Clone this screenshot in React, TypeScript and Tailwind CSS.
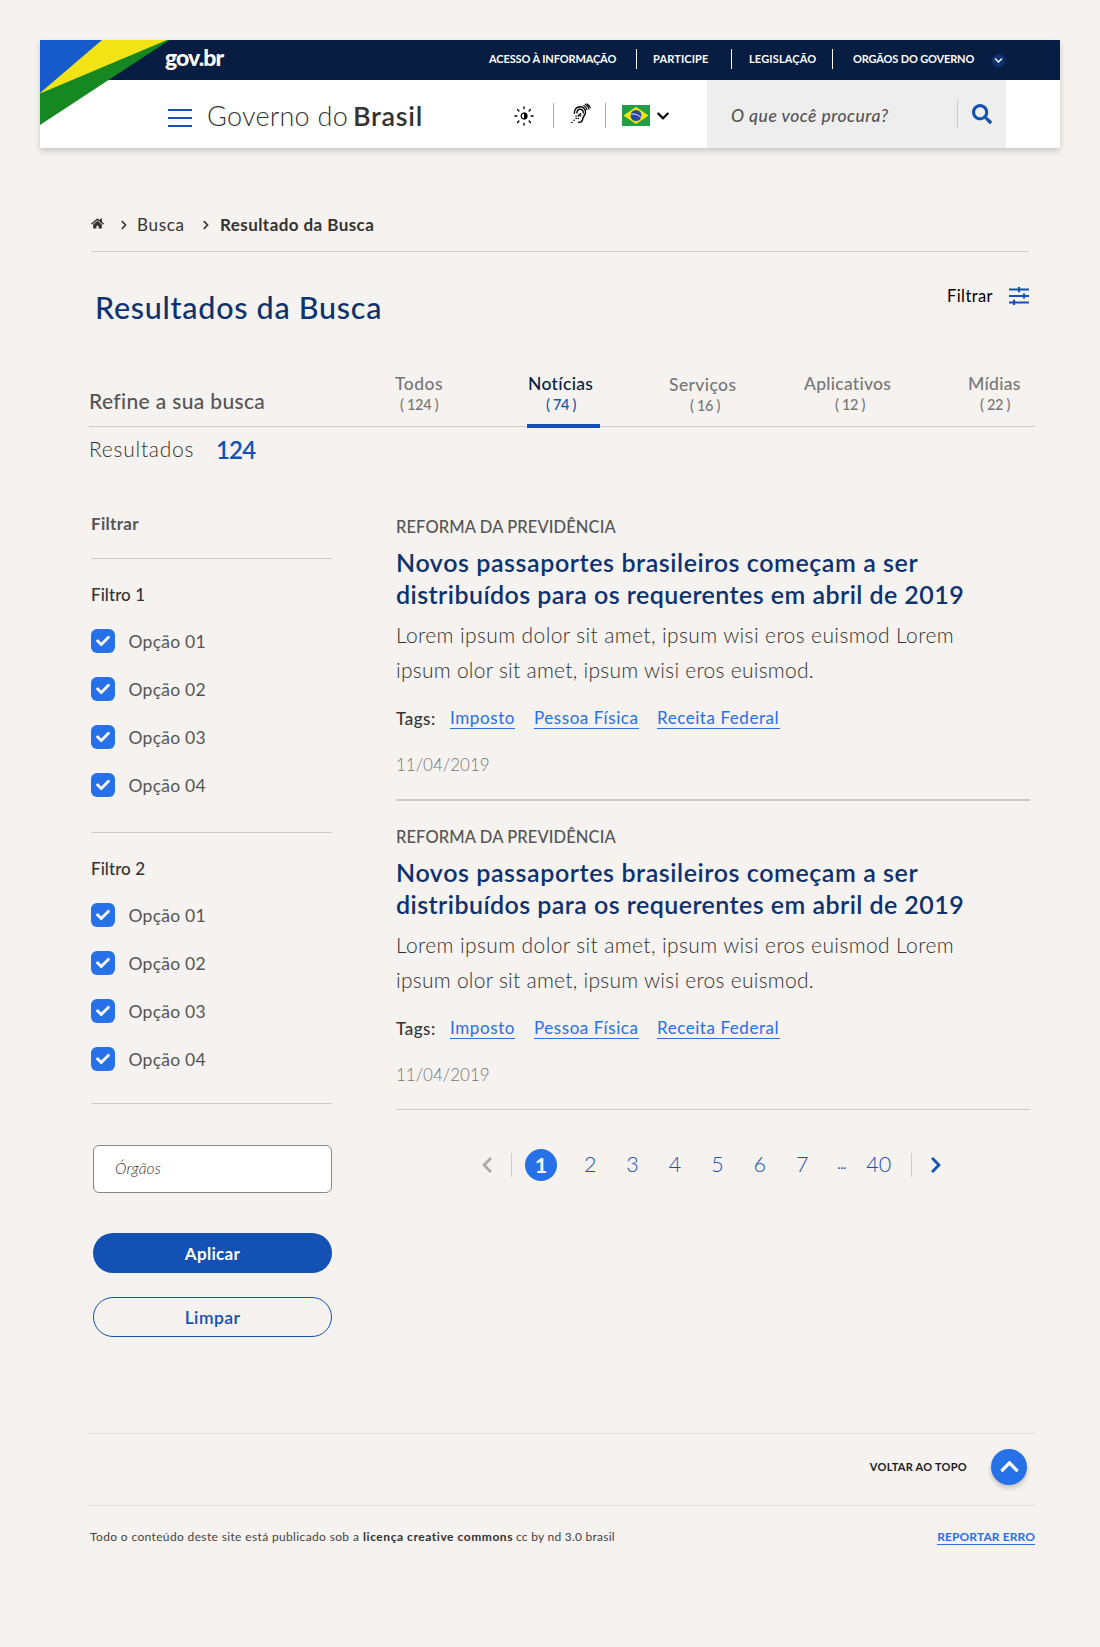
import {
  FaCheck,
  FaChevronDown,
  FaChevronLeft,
  FaChevronRight,
  FaChevronUp,
  FaHome,
  FaSearch,
} from "react-icons/fa";

function FlagCorner() {
  return (
    <svg className="absolute left-0 top-0" width="130" height="86" viewBox="0 0 130 86" aria-hidden="true">
      <polygon points="0,0 129.5,0 0,85" fill="#168821" />
      <polygon points="0,0 127,0 0,53.5" fill="#f2e317" />
      <polygon points="0,0 62,0 0,53" fill="#155bcb" />
    </svg>
  );
}

function BrightnessIcon() {
  return (
    <svg width="20" height="20" viewBox="0 0 20 20" fill="none" stroke="#000" strokeWidth="1.4" strokeLinecap="round" aria-hidden="true">
      <circle cx="10" cy="10" r="2.8" strokeWidth="1.2" />
      <path d="M10 6.6a3.4 3.4 0 0 1 0 6.8z" fill="#000" stroke="none" />
      <path d="M10 .9v1.7M10 17.4v1.7M.9 10h2M17.1 10h2M3.6 3.6l1.3 1.3M15.1 15.1l1.3 1.3M3.6 16.4l1.3-1.3M15.1 4.9l1.3-1.3" />
    </svg>
  );
}

function HearingIcon() {
  return (
    <svg width="20" height="21" viewBox="0 0 20 21" fill="none" stroke="#000" strokeWidth="1.4" strokeLinecap="round" aria-hidden="true">
      <path d="M3.4 10.200C3.100 6.200 5.800 3.700 9.100 3.700c3.500 0 5.900 2.600 5.400 6-.4 2.600-2.200 3.400-2.600 5.700-.4 2.300-1.500 4.200-4.300 3.900" />
      <path d="M5.900 9.900c-.1-2.300 1.300-3.700 3.300-3.700 2.100 0 3.300 1.500 3 3.600" />
      <path d="M12.700 2.500c1.700.8 2.900 2.300 3.300 4.200M14.300 1.200c1.900 1 3.200 2.700 3.600 4.700M16.200.9c1.400.9 2.500 2.200 3 3.700" strokeWidth="1.200" />
      <path d="M.9 19.500h.1M3 17.300h.1M5.100 15.200l.1.100M7.200 15.600h.1M5 12.900h.1M7.300 12.900l2.200-2.200M9.600 13.100h.1" strokeWidth="1.500" />
    </svg>
  );
}

function BrazilFlag() {
  return (
    <svg width="28" height="21" viewBox="0 0 28 21" aria-hidden="true">
      <rect width="28" height="21" fill="#239e46" />
      <path d="M1.500 10.500 14 2l12.500 8.500L14 19z" fill="#f8e509" />
      <circle cx="14" cy="10.500" r="5.500" fill="#2b49a3" />
      <path d="M8.800 9.200c3.800-.7 7.300.4 10.200 3.300" fill="none" stroke="#dfe6f3" strokeWidth="1" />
    </svg>
  );
}

function SlidersIcon() {
  return (
    <svg width="20" height="18" viewBox="0 0 20 18" stroke="#1351b4" strokeWidth="2.200" fill="none" aria-hidden="true">
      <path d="M0 2.500h20M0 9h20M0 15.500h20" />
      <path d="M10 0v5.200M15 6.400v5.200M5 12.800v5.200" />
    </svg>
  );
}

const tabs = [
  { label: "Todos", count: "( 124 )", box: "w-[132px]", labelGap: "tracking-[0.5px]", countGap: "ml-[5px]" },
  { label: "Notícias", count: "( 74 )", box: "w-[142px]", labelGap: "ml-px tracking-[0.35px]", countGap: "ml-[19px]", active: true },
  { label: "Serviços", count: "( 16 )", box: "w-[135px] pt-px", labelGap: "tracking-[0.4px]", countGap: "ml-[21px]" },
  { label: "Aplicativos", count: "( 12 )", box: "w-[164px]", labelGap: "tracking-[0.28px]", countGap: "ml-[31px]" },
  { label: "Mídias", count: "( 22 )", box: "w-[67px]", labelGap: "tracking-[0.3px]", countGap: "ml-[12px]" },
];

const options = ["Opção 01", "Opção 02", "Opção 03", "Opção 04"];

function Header() {
  return (
    <header className="relative mx-10 h-[108px] bg-white shadow-[0_3px_6px_rgba(0,0,0,0.18)]">
      <div className="flex h-10 items-center bg-[#071d41] pl-[125px] text-[11px] font-bold text-white">
        <span className="-mt-[6px] w-[324px] text-[23px] leading-[30px] font-black tracking-[-0.9px]">gov.br</span>
        <nav className="-mt-0.5 flex h-5 items-center whitespace-nowrap leading-5">
          <a className="w-[148px] border-r border-white tracking-[-0.12px]">ACESSO À INFORMAÇÃO</a>
          <a className="w-[95px] border-r border-white pl-[16px] tracking-[0.13px]">PARTICIPE</a>
          <a className="w-[101px] border-r border-white pl-[17px] tracking-[0.15px]">LEGISLAÇÃO</a>
          <a className="w-[159px] pl-[20px] tracking-[-0.15px]">ORGÃOS DO GOVERNO</a>
        </nav>
        <span className="flex size-[13px] items-center justify-center rounded-full bg-[#0c326f]">
          <FaChevronDown size={9} />
        </span>
      </div>
      <div className="flex h-[68px] items-center pl-[128px]">
        <div className="mt-2 flex w-6 flex-col gap-1.5">
          <span className="h-0.5 bg-[#1351b4]" />
          <span className="h-0.5 bg-[#1351b4]" />
          <span className="h-0.5 bg-[#1351b4]" />
        </div>
        <p className="mt-[3px] flex w-[306px] whitespace-nowrap pl-[15px] text-[27px] leading-9 text-[#333]">
          <span className="w-[146px] font-light tracking-[0.25px]">Governo do</span>
          <span className="font-semibold tracking-[0.7px]">Brasil</span>
        </p>
        <div className="mt-[3px] flex h-[26px] items-center">
          <span className="mr-[19px] ml-[16px]">
            <BrightnessIcon />
          </span>
          <span className="h-[25px] w-px bg-[#aaa]" />
          <span className="-mt-1 mr-[14px] ml-[17px]">
            <HearingIcon />
          </span>
          <span className="h-[25px] w-px bg-[#aaa]" />
          <span className="ml-[16px]">
            <BrazilFlag />
          </span>
          <FaChevronDown size={14} className="ml-[6px]" />
        </div>
        <div className="ml-[37px] flex h-[68px] w-[299px] items-center bg-[#eee] pl-[24px]">
          <span className="mt-[3px] w-[226px] text-[17.500px] leading-6 font-medium text-[#555] italic tracking-[0.5px]">
            O que você procura?
          </span>
          <span className="h-7 w-px bg-[#ccc]" />
          <FaSearch size={20} className="ml-[14px] text-[#1351b4]" />
        </div>
      </div>
      <FlagCorner />
    </header>
  );
}

function Breadcrumb() {
  return (
    <nav className="mt-[65px] ml-[91px] flex h-[39px] w-[938px] items-start border-b border-[#ccc] text-[17px] leading-6 text-[#333]">
      <FaHome size={13} className="mt-1" />
      <span className="ml-[15px] flex h-6 w-[18px] items-center">
        <FaChevronRight size={10} />
      </span>
      <a className="w-[64px] tracking-[0.7px]">Busca</a>
      <span className="flex h-6 w-[19px] items-center">
        <FaChevronRight size={10} />
      </span>
      <span className="font-bold tracking-[0.43px]">Resultado da Busca</span>
    </nav>
  );
}

function FilterGroup({ title, tall }: { title: string; tall?: boolean }) {
  return (
    <section className={`border-b border-[#ccc] pt-6 ${tall ? "h-[274px]" : "h-[271px]"}`}>
      <h3 className="text-[17px] leading-6 font-medium text-[#333] tracking-[0.05px]">{title}</h3>
      <ul className="mt-[22px] flex flex-col gap-6">
        {options.map((o) => (
          <li key={o} className="flex h-6 items-center text-[17.500px] leading-6 text-[#555]">
            <span className="flex size-6 items-center justify-center rounded-[6px] bg-[#2670e8] text-white">
              <FaCheck size={14} />
            </span>
            <span className="mt-0.5 ml-[13.500px] tracking-[0.25px]">{o}</span>
          </li>
        ))}
      </ul>
    </section>
  );
}

function Sidebar() {
  return (
    <aside className="w-[241px]">
      <h2 className="h-[47px] border-b border-[#ccc] text-[17px] leading-6 font-bold text-[#555] tracking-[0.3px]">Filtrar</h2>
      <FilterGroup title="Filtro 1" tall />
      <FilterGroup title="Filtro 2" />
      <div className="ml-0.5">
        <div className="mt-[41px] flex h-12 items-center rounded-md border border-[#888] bg-white pl-[21px] text-[15.500px] font-light text-[#333] italic tracking-[0.2px]">
          Órgãos
        </div>
        <button className="mt-10 block h-10 w-full rounded-full bg-[#1351b4] pt-0.5 text-[17px] leading-[38px] font-bold text-white tracking-[0.300px]">
          Aplicar
        </button>
        <button className="mt-6 block h-10 w-full rounded-full border border-[#1351b4] pt-0.5 text-[17.500px] leading-9 font-semibold text-[#1351b4] tracking-[0.45px]">
          Limpar
        </button>
      </div>
    </aside>
  );
}

function Article({ rule }: { rule: string }) {
  return (
    <article className={`${rule} border-[#ccc]`}>
      <p className="pt-px text-[16.500px] leading-6 font-medium text-[#555] tracking-[0.1px]">REFORMA DA PREVIDÊNCIA</p>
      <h2 className="mt-[7px] whitespace-nowrap text-[25px] leading-8 font-semibold text-[#0c326f]">
        <span className="block tracking-[0.58px]">Novos passaportes brasileiros começam a ser</span>
        <span className="block tracking-[0.44px]">distribuídos para os requerentes em abril de 2019</span>
      </h2>
      <p className="mt-[7px] whitespace-nowrap text-[21px] leading-[35px] font-light text-[#333]">
        <span className="block tracking-[0.38px]">Lorem ipsum dolor sit amet, ipsum wisi eros euismod Lorem</span>
        <span className="block tracking-[0.26px]">ipsum olor sit amet, ipsum wisi eros euismod.</span>
      </p>
      <div className="mt-5 flex items-start whitespace-nowrap text-[17px] leading-6 text-[#2670e8]">
        <span className="w-[54px] font-medium text-[#333] tracking-[0.5px]">Tags:</span>
        <a className="-mt-px mr-[19px] h-[23px] w-[65px] border-b border-[#2670e8] tracking-[0.6px]">Imposto</a>
        <a className="-mt-px mr-[18px] h-[23px] w-[105px] border-b border-[#2670e8] tracking-[0.55px]">Pessoa Física</a>
        <a className="-mt-px h-[23px] w-[123px] border-b border-[#2670e8] tracking-[0.55px]">Receita Federal</a>
      </div>
      <p className="mt-[22px] text-[17px] leading-6 font-light text-[#777] tracking-[0px]">11/04/2019</p>
    </article>
  );
}

function Pagination() {
  return (
    <nav className="mt-[39px] ml-[82px] flex h-8 items-center text-[21.500px] leading-8 font-light text-[#1351b4]">
      <FaChevronLeft size={18} className="text-[#aaa]" />
      <span className="ml-[15px] h-6 w-px bg-[#ccc]" />
      <span className="ml-[13px] flex size-8 items-center justify-center rounded-full bg-[#2670e8] font-bold text-white">1</span>
      <div className="ml-[12px] flex text-center">
        {["2", "3", "4", "5", "6", "7"].map((n) => (
          <a key={n} className="-mt-0.5 w-[42.400px]">{n}</a>
        ))}
      </div>
      <span className="-mt-0.5 ml-[14px] w-[29px] text-[14px] font-normal tracking-[-0.5px]">...</span>
      <a className="-mt-0.5">40</a>
      <span className="ml-[20px] h-6 w-px bg-[#ccc]" />
      <FaChevronRight size={18} className="ml-[15px]" />
    </nav>
  );
}

function Footer() {
  return (
    <footer className="mt-24 ml-[89px] w-[946px] border-t border-[#dfdcd9]">
      <div className="flex h-[72px] items-start justify-end border-b border-[#dfdcd9] pt-[15px] pr-2">
        <span className="mr-[24px] text-[11px] leading-[35px] font-bold text-[#1b1b1b] tracking-[0.27px]">VOLTAR AO TOPO</span>
        <span className="flex size-9 items-center justify-center rounded-full bg-[#2670e8] text-white shadow-[0_3px_5px_rgba(0,0,0,0.2)]">
          <FaChevronUp size={21} className="-mt-0.5" />
        </span>
      </div>
      <div className="mt-[21px] flex justify-between pl-px text-[12px] leading-5 whitespace-nowrap text-[#444]">
        <p className="flex">
          <span className="w-[273px] tracking-[0.36px]">Todo o conteúdo deste site está publicado sob a</span>
          <strong className="w-[153px] font-bold text-[#333] tracking-[0.55px]">licença creative commons</strong>
          <span className="tracking-[0.25px]">cc by nd 3.0 brasil</span>
        </p>
        <a className="h-[18px] border-b border-[#2670e8] font-bold text-[#2670e8] tracking-[0.1px]">REPORTAR ERRO</a>
      </div>
    </footer>
  );
}

export default function App() {
  return (
    <div className="flex h-[1647px] w-[1100px] flex-col overflow-hidden bg-[#f6f2ef] pt-10 font-['Lato',sans-serif]">
      <Header />
      <Breadcrumb />
      <div className="mt-8 ml-[95px] flex w-[934px] items-start justify-between">
        <h1 className="mt-[3px] text-[30.500px] leading-10 font-medium text-[#0c326f] tracking-[0.72px]">Resultados da Busca</h1>
        <div className="flex items-center text-[16.500px] leading-6 text-black">
          <span className="mr-[16px] tracking-[0.4px]">Filtrar</span>
          <SlidersIcon />
        </div>
      </div>
      <div className="mt-[43px] ml-[89px] flex h-[57px] w-[946px] items-start border-b border-[#ccc]">
        <h2 className="w-[306px] pt-[19px] text-[21px] leading-6 font-medium text-[#555] tracking-[0.35px]">Refine a sua busca</h2>
        <div className="flex pt-[3px] leading-[21px] font-medium">
          {tabs.map((t) => (
            <div key={t.label} className={`relative h-[54px] ${t.box} ${t.active ? "text-[#071d41]" : "text-[#777]"}`}>
              <p className={`text-[17.500px] ${t.labelGap}`}>{t.label}</p>
              <p className={`text-[14.500px] tracking-[-0.3px] ${t.countGap} ${t.active ? "text-[#1351b4]" : ""}`}>{t.count}</p>
              {t.active && <span className="absolute bottom-[-1px] left-0 h-1 w-[73px] bg-[#1351b4]" />}
            </div>
          ))}
        </div>
      </div>
      <div className="mt-2.5 ml-[89px] flex h-6 items-center">
        <span className="w-[127px] text-[21px] font-light text-[#333] tracking-[0.75px]">Resultados</span>
        <span className="mt-0.5 text-[24px] font-semibold text-[#1351b4] tracking-[-0.8px]">124</span>
      </div>
      <div className="mt-[51px] ml-[91px] flex h-[825px] items-start">
        <Sidebar />
        <main className="mt-0.5 ml-[64px] w-[634px]">
          <Article rule="h-[287px] border-b-2" />
          <div className="h-[23px]" />
          <Article rule="h-[286px] border-b" />
          <Pagination />
        </main>
      </div>
      <Footer />
    </div>
  );
}
